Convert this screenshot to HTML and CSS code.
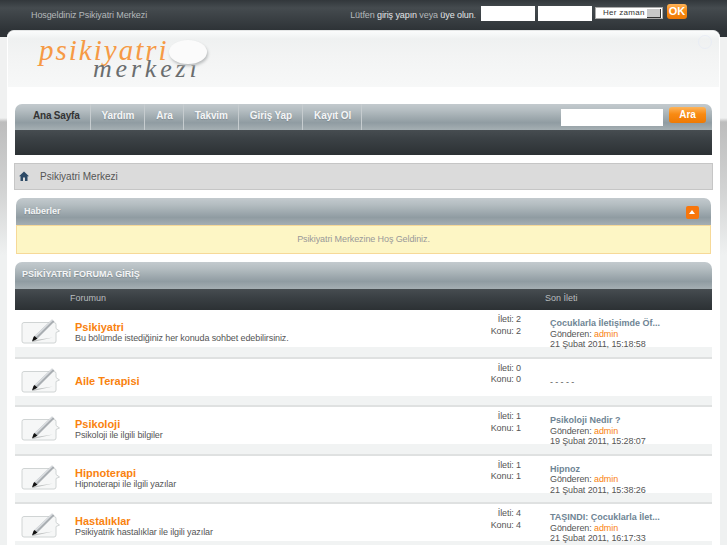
FILE: index.html
```html
<!DOCTYPE html>
<html lang="tr">
<head>
  <meta charset="UTF-8" />
  <title>Psikiyatri Merkezi</title>
  <link rel="stylesheet" href="styles.css">
</head>
<body>

  <svg class="defs" width="0" height="0">
    <symbol id="board-icon" viewBox="0 0 40 26">
      <path d="M3 3.500h30a2 2 0 0 1 2 2v4l3.500 2.500-3.500 1.500v8.500a2 2 0 0 1-2 2H3a2 2 0 0 1-2-2v-16.500a2 2 0 0 1 2-2z" fill="#f6f7f7" stroke="#d0d4d4" />
      <path d="M11 21.500 32 18.500 12 23z" fill="#bfc2c2" />
      <path d="M31 .5 33.500 2.500 16.500 19.500 13.500 17z" fill="#a9aeb2" />
      <path d="M31 .5 32 1.300 15 18 13.500 17z" fill="#dcdfe2" />
      <path d="M16.500 19.500 13.500 17 12.500 18 11 22.500 15 20.500z" fill="#111" />
    </symbol>
  </svg>

  <div class="topbar">
    <div class="welcome">Hosgeldiniz Psikiyatri Merkezi</div>
    <div class="login">
      <span>Lütfen <b>giriş yapın</b> veya <b>üye olun</b>.</span>
      <input type="text" class="login-input" />
      <input type="text" class="login-input" />
      <div class="select">Her zaman <i></i></div>
      <div class="btn btn-ok">OK</div>
    </div>
  </div>

  <div class="wrapper">
    <div class="header">
      <div class="logo">
        <div class="logo-top">psikiyatri</div>
        <div class="logo-bottom">merkezi</div>
        <div class="bubble"></div>
      </div>
      <div class="toggle"></div>
    </div>

    <div class="nav">
      <div class="menu">
        <a class="active">Ana Sayfa</a>
        <a>Yardım</a>
        <a>Ara</a>
        <a>Takvim</a>
        <a>Giriş Yap</a>
        <a>Kayıt Ol</a>
        <div class="search">
          <input type="text" class="search-input" />
          <div class="btn btn-search">Ara</div>
        </div>
      </div>
      <div class="submenu"></div>
    </div>

    <div class="breadcrumb">
      <svg class="home" width="10" height="10" viewBox="0 0 10 10">
        <path d="M5 .5 10 5.200H8.500V10H6V6.500H4V10H1.500V5.200H0z" fill="#2d4a66" />
      </svg>
      <span>Psikiyatri Merkezi</span>
    </div>

    <div class="news">
      <div class="cat news-cat">
        <span>Haberler</span>
        <div class="collapse"></div>
      </div>
      <div class="news-body">Psikiyatri Merkezine Hoş Geldiniz.</div>
    </div>

    <div class="forum">
      <div class="cat forum-cat">PSİKİYATRİ FORUMA GİRİŞ</div>
      <div class="forum-head">
        <span class="head-name">Forumun</span>
        <span class="head-last">Son İleti</span>
      </div>

      <div class="row">
        <svg class="board"><use href="#board-icon" /></svg>
        <div class="info">
          <a class="title">Psikiyatri</a>
          <div>Bu bölümde istediğiniz her konuda sohbet edebilirsiniz.</div>
        </div>
        <div class="stats">İleti: 2<br>Konu: 2</div>
        <div class="last">
          <a class="last-title">Çocuklarla İletişimde Öf...</a>
          <div>Gönderen: <a class="user">admin</a></div>
          <div>21 Şubat 2011, 15:18:58</div>
        </div>
      </div>

      <div class="row">
        <svg class="board"><use href="#board-icon" /></svg>
        <div class="info">
          <a class="title">Aile Terapisi</a>
        </div>
        <div class="stats">İleti: 0<br>Konu: 0</div>
        <div class="last last-empty">- - - - -</div>
      </div>

      <div class="row">
        <svg class="board"><use href="#board-icon" /></svg>
        <div class="info">
          <a class="title">Psikoloji</a>
          <div>Psikoloji ile ilgili bilgiler</div>
        </div>
        <div class="stats">İleti: 1<br>Konu: 1</div>
        <div class="last">
          <a class="last-title">Psikoloji Nedir ?</a>
          <div>Gönderen: <a class="user">admin</a></div>
          <div>19 Şubat 2011, 15:28:07</div>
        </div>
      </div>

      <div class="row">
        <svg class="board"><use href="#board-icon" /></svg>
        <div class="info">
          <a class="title">Hipnoterapi</a>
          <div>Hipnoterapi ile ilgili yazılar</div>
        </div>
        <div class="stats">İleti: 1<br>Konu: 1</div>
        <div class="last">
          <a class="last-title">Hipnoz</a>
          <div>Gönderen: <a class="user">admin</a></div>
          <div>21 Şubat 2011, 15:38:26</div>
        </div>
      </div>

      <div class="row">
        <svg class="board"><use href="#board-icon" /></svg>
        <div class="info">
          <a class="title">Hastalıklar</a>
          <div>Psikiyatrik hastalıklar ile ilgili yazılar</div>
        </div>
        <div class="stats">İleti: 4<br>Konu: 4</div>
        <div class="last">
          <a class="last-title">TAŞINDI: Çocuklarla İlet...</a>
          <div>Gönderen: <a class="user">admin</a></div>
          <div>21 Şubat 2011, 16:17:33</div>
        </div>
      </div>
    </div>
  </div>

</body>
</html>
```

FILE: styles.css
```css
:root {
  --orange: #f9820f;
  --text: #555;
  --bar: linear-gradient(to bottom, #c3cace 0%, #b4bdc1 25%, #909ca2 72%, #a5afb3 100%);
  --dark: linear-gradient(to bottom, #474d51 0%, #3a4044 40%, #2c3134 100%);
}

html, body {
  height: 545px;
  overflow: hidden;
}

body {
  margin: 0;
  background: linear-gradient(to bottom, #f0f1f1 0, #f0f1f1 118px, #bdbdbd 122px, #d2d3d3 190px, #eff1f1 255px);
  font-family: "Liberation Sans", Arial, sans-serif;
  font-size: 9px;
  letter-spacing: -.1px;
  color: var(--text);
}

.defs {
  position: absolute;
}

.topbar {
  height: 37px;
  margin-bottom: -7px;
  padding: 4px 40px 0 31px;
  box-sizing: border-box;
  background: linear-gradient(to bottom, #32373b 0, #454b4f 8px, #2e3337 30px);
  display: flex;
  justify-content: space-between;
  color: #b4b8ba;
}

.welcome {
  margin-top: 6px;
}

.login {
  display: flex;
  align-items: flex-start;
}

.login span {
  margin-top: 6px;
  margin-right: 5px;
}

.login b {
  font-weight: normal;
  color: #e4e6e7;
}

.login-input {
  width: 53.500px;
  height: 15px;
  margin: 2px 3.500px 0 0;
  padding: 0;
  box-sizing: border-box;
  border: none;
  background: #fff;
}

.select {
  width: 68px;
  height: 12px;
  margin-top: 3px;
  margin-right: 4px;
  padding-left: 7px;
  box-sizing: border-box;
  background: #fff;
  border: 1px solid #aaa;
  color: #333;
  font-size: 8px;
  line-height: 10px;
  letter-spacing: .3px;
  position: relative;
}

.select i {
  position: absolute;
  right: 1px;
  top: 1px;
  width: 13px;
  height: 8px;
  background: #c8c8c8;
  border-right: 1px solid #333;
  border-bottom: 1px solid #333;
}

.btn {
  background: linear-gradient(to bottom, #fdb45a 0, #f98a12 45%, #ee7a05 100%);
  border-radius: 3px;
  color: #fff;
  font-weight: bold;
  text-align: center;
  letter-spacing: 0;
}

.btn-ok {
  width: 20px;
  height: 15px;
  font-size: 11px;
  line-height: 14px;
}

.wrapper {
  position: relative;
  margin: 0 7px;
  height: 600px;
  padding: 0 8px;
  background: #fff;
  border-radius: 7px 7px 0 0;
  border-top: 1px solid #e4e6e6;
}

.header {
  height: 56px;
  margin: 0 -7px 17px;
  position: relative;
  background: linear-gradient(to bottom, #fbfcfc 0, #eff1f1 8px, #f3f4f4 25px, #f7f8f8 56px);
  border-radius: 7px 7px 0 0;
}

.logo {
  position: absolute;
  left: 30px;
  top: 5px;
  width: 180px;
  height: 48px;
  font-family: "Liberation Serif", serif;
  font-style: italic;
}

.logo-top {
  position: absolute;
  left: 1px;
  top: 0;
  font-size: 29px;
  line-height: 28px;
  letter-spacing: 2px;
  color: #f69a45;
}

.logo-bottom {
  position: absolute;
  left: 55px;
  top: 23px;
  font-size: 26px;
  line-height: 20px;
  letter-spacing: 3.800px;
  color: #6a6d6e;
}

.bubble {
  position: absolute;
  left: 131px;
  top: 4px;
  width: 38px;
  height: 24px;
  border-radius: 50%;
  background: #fbfbfb;
  box-shadow: 1px 2px 3px #b9bcbd;
}

.toggle {
  position: absolute;
  right: 7px;
  top: 4px;
  width: 12px;
  height: 12px;
  border-radius: 50%;
  border: 1px solid #e9edf5;
}

.nav {
  margin-bottom: 8px;
}

.menu {
  height: 26px;
  display: flex;
  background: var(--bar);
  border-radius: 7px 7px 0 0;
}

.menu a {
  padding: 0 10px 0 11px;
  line-height: 24px;
  font-size: 10px;
  font-weight: bold;
  letter-spacing: -.1px;
  color: #f4f5f6;
  border-right: 1px solid #c6cccf;
  text-shadow: 0 1px 1px #7f8a90;
}

.menu a.active {
  padding: 0 10px 0 18px;
  color: #333;
  letter-spacing: -.2px;
  text-shadow: none;
}

.search {
  margin-left: auto;
  display: flex;
  padding: 3px 6px 0 0;
}

.search-input {
  width: 102px;
  height: 17px;
  margin: 2px 6px 0 0;
  padding: 0;
  box-sizing: border-box;
  border: none;
  background: #fff;
}

.btn-search {
  width: 37px;
  height: 16px;
  font-size: 10px;
  line-height: 15px;
}

.submenu {
  height: 25px;
  background: var(--dark);
}

.breadcrumb {
  height: 27px;
  margin: 0 -1px 8px;
  padding-left: 4px;
  box-sizing: border-box;
  display: flex;
  align-items: center;
  gap: 11px;
  background: #dbdbdb;
  border: 1px solid #c6c6c6;
  font-size: 10px;
  letter-spacing: 0;
}

.home {
  margin-top: -1px;
}

.cat {
  background: var(--bar);
  border-radius: 7px 7px 0 0;
  color: #f4f5f6;
  font-weight: bold;
  letter-spacing: 0;
  text-shadow: 0 1px 1px #7f8a90;
}

.news {
  margin: 0 1px 8px;
}

.news-cat {
  height: 27px;
  padding: 0 12px 0 8px;
  display: flex;
  justify-content: space-between;
  align-items: center;
  font-size: 9px;
  line-height: 10px;
}

.news-cat span {
  margin-top: -2px;
}

.collapse {
  width: 13px;
  height: 13px;
  margin-top: 2px;
  position: relative;
  background: #f8760c;
  border-radius: 2px;
}

.collapse::after {
  content: "";
  position: absolute;
  left: 3px;
  top: 4px;
  border: 3.500px solid transparent;
  border-top: none;
  border-bottom: 4px solid #fff;
}

.news-body {
  height: 29px;
  box-sizing: border-box;
  background: #fdf6c5;
  border: 1px solid #f6d998;
  text-align: center;
  line-height: 26px;
  color: #999;
}

.forum-cat {
  height: 27px;
  padding-left: 7px;
  line-height: 25px;
  font-size: 9px;
}

.forum-head {
  height: 21px;
  display: flex;
  background: var(--dark);
  color: #b9bdbf;
  line-height: 19px;
  letter-spacing: 0;
}

.head-name {
  margin-left: 55px;
}

.head-last {
  margin-left: 439px;
}

.row {
  height: 48.500px;
  box-sizing: border-box;
  display: grid;
  grid-template-columns: 60px 1fr 71px 162px;
  background: linear-gradient(to bottom, #fff 0, #fff 37px, #f1f3f3 37px);
  border-bottom: 2px solid #dfe1e1;
}

.board {
  width: 40px;
  height: 26px;
  margin: 9px 0 0 6px;
}

.info {
  line-height: 11px;
  align-self: center;
}

.title {
  display: block;
  color: var(--orange);
  font-size: 11px;
  font-weight: bold;
  line-height: 11px;
  letter-spacing: 0;
}

.stats {
  grid-column: 3;
  margin-right: 29px;
  text-align: right;
  padding-top: 4px;
  line-height: 11.500px;
}

.last {
  padding-top: 8px;
  line-height: 10.500px;
}

.last-empty {
  padding-top: 18px;
}

.last-title {
  display: block;
  color: #6e8494;
  font-weight: bold;
  letter-spacing: 0;
}

.user {
  color: var(--orange);
}
```
